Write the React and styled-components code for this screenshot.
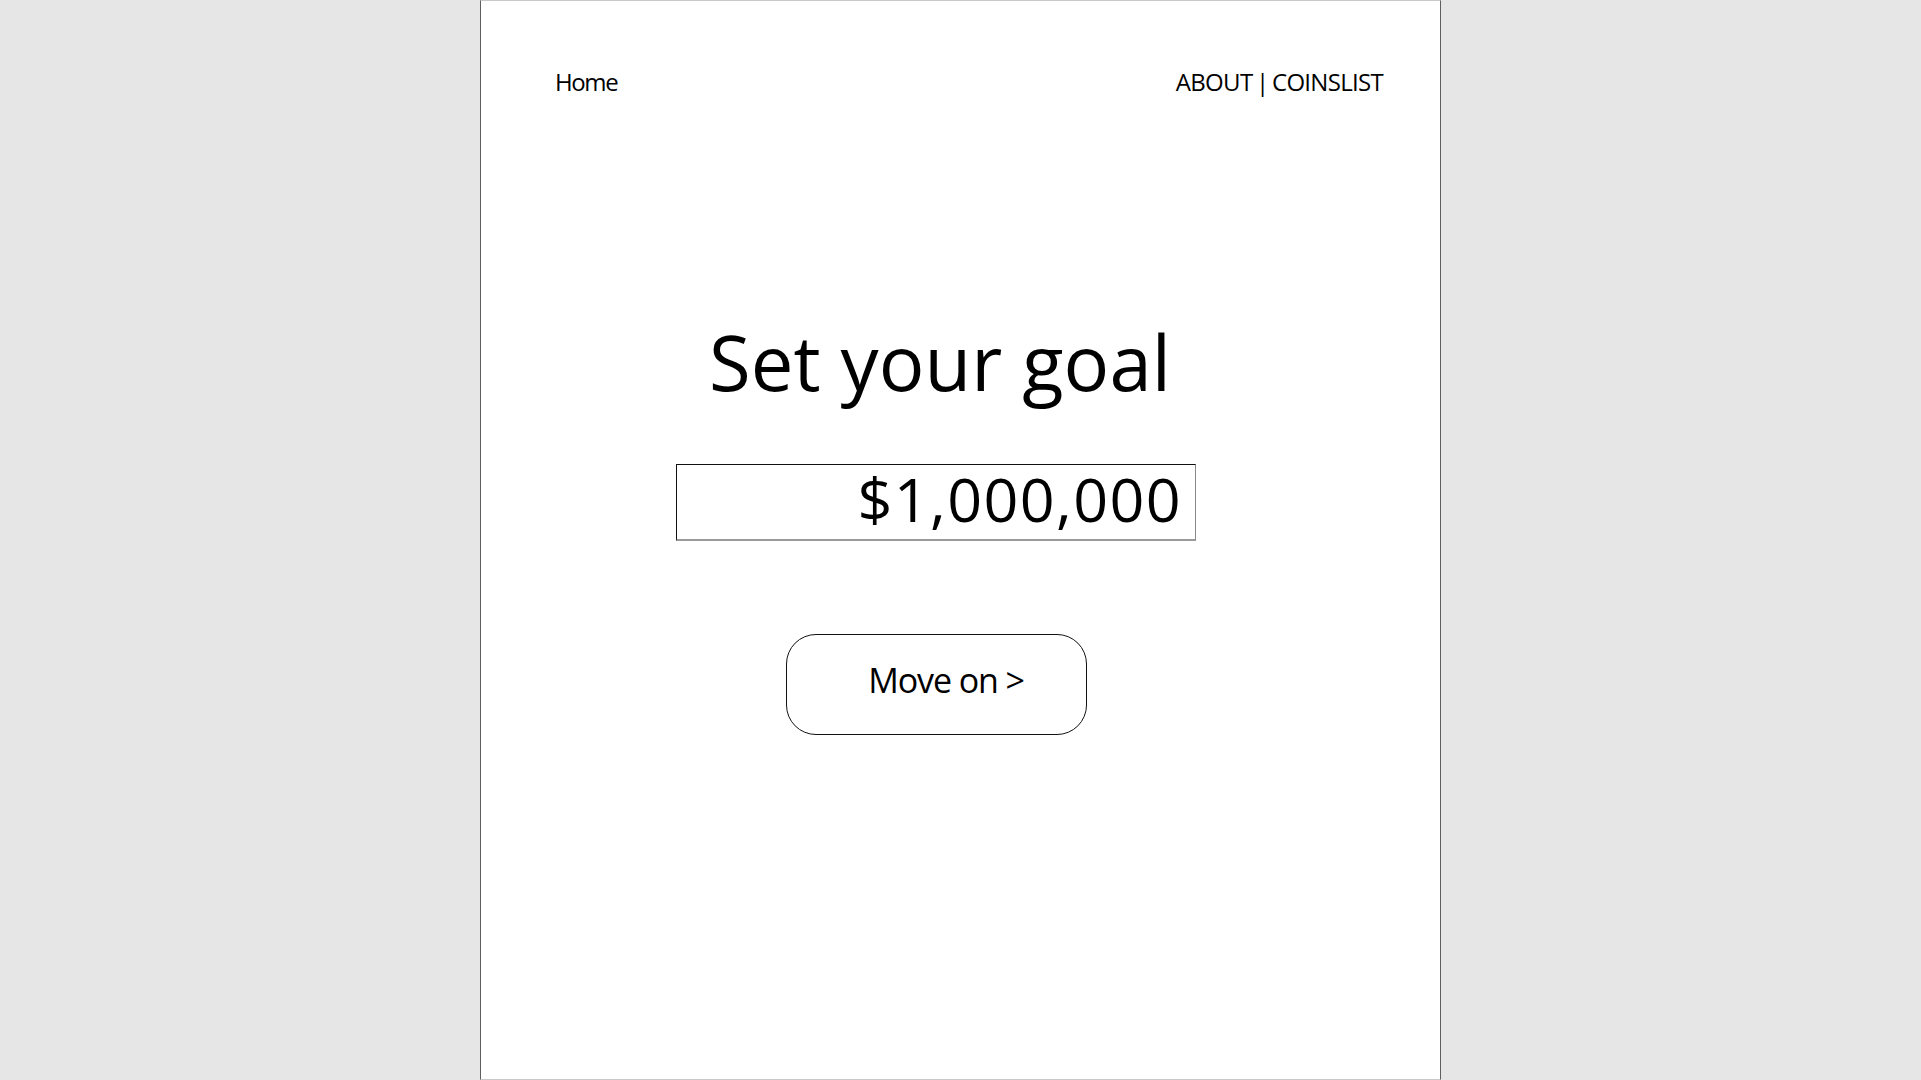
import React from 'react'
import styled, { createGlobalStyle } from 'styled-components'

const GlobalStyle = createGlobalStyle`
    html, body {
        margin: 0;
        padding: 0;
        background: #e5e6e5;
    }
    body {
        font-family: "Open Sans", Lato, sans-serif;
        color: #000;
    }
`;

// Styled components
const Page = styled.div`
    box-sizing: border-box;
    width: 961px;
    height: 1080px;
    margin-left: 480px;
    background: #fff;
    border-left: 1px solid #5f5f5f;
    border-right: 1px solid #5f5f5f;
    border-top: 1px solid #c9c9c9;
    border-bottom: 1px solid #c9c9c9;
    display: flex;
    flex-direction: column;
`;
const Header = styled.nav`
    display: flex;
    justify-content: space-between;
    padding: 66px 57px 0 74px;
    font-size: 24px;
    line-height: 30px;
`;
const NavLink = styled.a`
    color: #000;
    text-decoration: none;
    letter-spacing: ${props => props.tight ? '-0.7px' : '-1.4px'};
    word-spacing: ${props => props.tight ? '-2px' : '0'};
    cursor: pointer;
`;
const Main = styled.main`
    display: flex;
    flex-direction: column;
    align-items: center;
    padding-right: 49px;
    margin-top: 219px;
`;
const Title = styled.h1`
    margin: 0 0 0 8px;
    font-size: 76px;
    font-weight: 400;
    line-height: 1.2;
    letter-spacing: 0.1px;
`;
const GoalInput = styled.input`
    box-sizing: border-box;
    width: 520px;
    height: 77px;
    margin-top: 57px;
    padding: 3px 13px 10px 12px;
    border: 1px solid #111;
    border-right-color: #8a8a8a;
    border-bottom: 2px solid #9a9a9a;
    font-family: inherit;
    font-size: 61px;
    line-height: 61px;
    letter-spacing: 1.4px;
    text-align: right;
    color: #000;
    background: #fff;
    outline: none;
`;
const Button = styled.button`
    box-sizing: border-box;
    width: 301px;
    height: 101px;
    margin-top: 93px;
    padding: 0 0 9px 20px;
    background: #fff;
    border: 1px solid #111;
    border-radius: 30px;
    font-family: inherit;
    font-size: 34px;
    letter-spacing: -1.1px;
    color: #000;
    cursor: pointer;
`;

export default function App() {
    return (
        <>
            <GlobalStyle />
            <Page>
                <Header>
                    <NavLink>Home</NavLink>
                    <NavLink tight>ABOUT | COINSLIST</NavLink>
                </Header>
                <Main>
                    <Title>Set your goal</Title>
                    <GoalInput defaultValue="$1,000,000" />
                    <Button>Move on &gt;</Button>
                </Main>
            </Page>
        </>
    )
}
